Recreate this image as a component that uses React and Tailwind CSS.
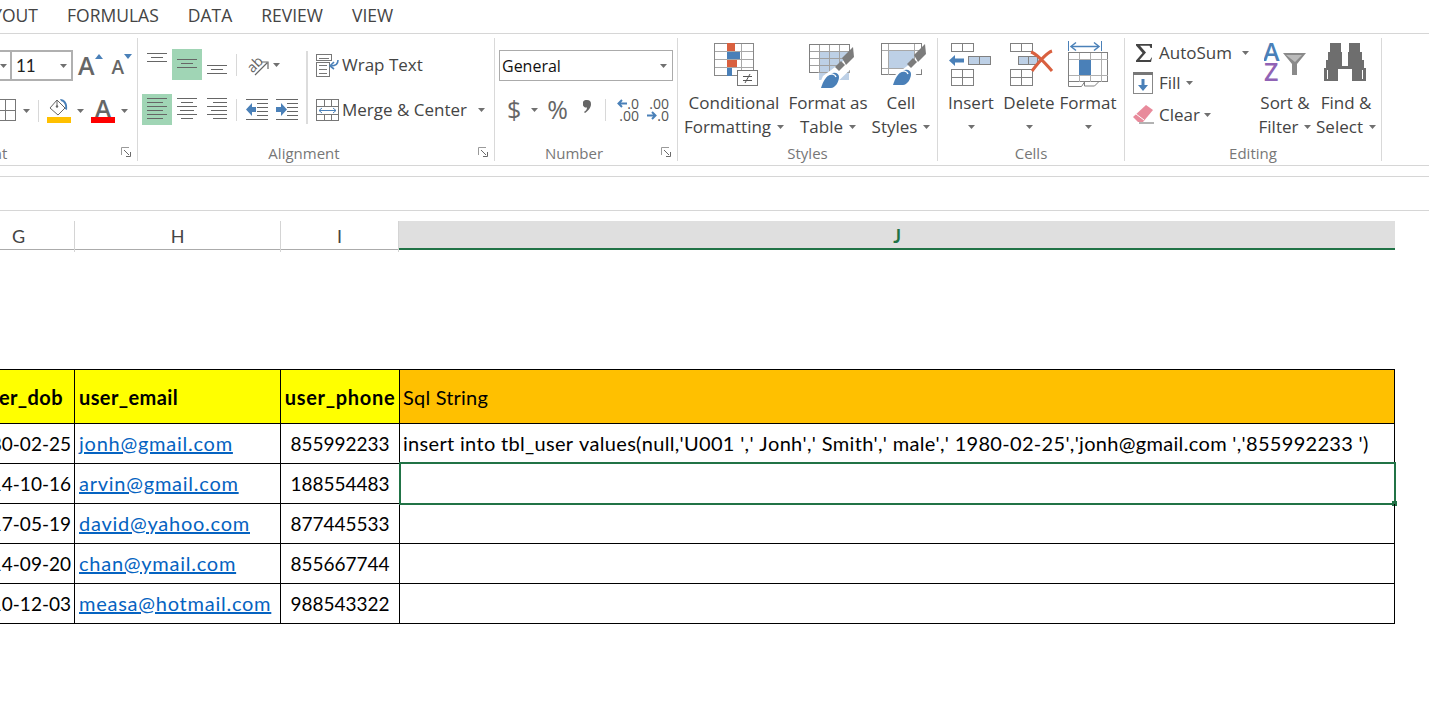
import React from 'react';

const blue = '#4a80b8';
const lightBlue = '#bdd0e6';
const red = '#d9603f';

const Caret = ({ className = '' }) => (
  <svg width="7" height="4" viewBox="0 0 7 4" className={`shrink-0 ${className}`}>
    <path d="M0 0h7L3.500 4z" fill="#707070" />
  </svg>
);

const Launcher = () => (
  <svg width="11" height="11" viewBox="0 0 11 11" className="absolute right-[5px] top-[5px]">
    <path d="M.5 8V.5H8" fill="none" stroke="#9a9a9a" />
    <path d="M3 3l5 5M9.500 5v4.500H5" fill="none" stroke="#6a6a6a" />
  </svg>
);

// horizontal rule icons for the alignment buttons: [x, y, w]
const Lines = ({ lines, w = 30, h = 31 }) => (
  <svg width={w} height={h} viewBox={`0 0 ${w} ${h}`} shapeRendering="crispEdges" className="block">
    {lines.map(([x, y, width], i) => (
      <rect key={i} x={x} y={y} width={width} height="1" fill="#666" />
    ))}
  </svg>
);

const AlignBtn = ({ lines, active }) => (
  <div className={`w-[30px] h-[31px] ${active ? 'bg-[#a0d5b5]' : ''}`}>
    <Lines lines={lines} />
  </div>
);

const VSep = () => <div className="w-px h-[22px] bg-[#d8d8d8]" />;

const IndentIcon = ({ right }) => (
  <svg width="23" height="21" viewBox="0 0 23 21" shapeRendering="crispEdges">
    <path d="M0 0.500h22M0 20.500h22M11 4.500h11M11 8.500h11M11 12.500h11M11 16.500h11" stroke="#666" fill="none" />
    <g shapeRendering="auto">
      {right ? <path d="M0 8h5V4l6 6.500-6 6.500v-4H0z" fill={blue} /> : <path d="M10 8H6V4l-6 6.500L6 17v-4h4z" fill={blue} />}
    </g>
  </svg>
);

const WrapIcon = () => (
  <svg width="24" height="23" viewBox="0 0 24 23" shapeRendering="crispEdges">
    <path d="M.5.500h15v6H.5zM.5 8.500h13v14H.5z" fill="#fff" stroke="#777" />
    <path d="M3 4h10M3 11h8M3 15h8M3 19h8" stroke="#777" />
    <path d="M22 6c0 5-3 6-7 6" fill="none" stroke={blue} strokeWidth="1.600" shapeRendering="auto" />
    <path d="M18 8l-4 4 4 3" fill="none" stroke={blue} strokeWidth="1.600" shapeRendering="auto" />
  </svg>
);

const MergeIcon = () => (
  <svg width="24" height="23" viewBox="0 0 24 23" shapeRendering="crispEdges">
    <path d="M.5.500h22v21H.5zM.5 7.500h22M.5 15.500h22M8.500.500v7M15.500.500v7M8.500 15.500v6M15.500 15.500v6" fill="none" stroke="#777" />
    <path d="M3 11.500h17" stroke={blue} />
    <path d="M6 9l-3 2.500L6 14M17 9l3 2.500L17 14" fill="none" stroke={blue} shapeRendering="auto" />
  </svg>
);

const CommaIcon = () => (
  <svg width="8" height="13" viewBox="0 0 8 13">
    <path d="M4 0a4 4 0 0 1 4 4c0 4-3 7-6 9l-1-1c2-1 3-3 3-4.500A3.800 3.800 0 1 1 4 0z" fill="#666" />
  </svg>
);

const ArrowSmall = ({ right }) => (
  <svg width="10" height="9" viewBox="0 0 10 9">
    {right ? <path d="M0 4.500h8M5 1l3.500 3.500L5 8" fill="none" stroke={blue} strokeWidth="2" /> : <path d="M10 4.500H2M5 1L1.500 4.500 5 8" fill="none" stroke={blue} strokeWidth="2" />}
  </svg>
);

const CondIcon = () => (
  <svg width="46" height="44" viewBox="0 0 46 44" shapeRendering="crispEdges">
    <path d="M.5.500h39v32H.5zM.5 8.500h39M.5 16.500h39M.5 24.500h39M13.500.500v32M27.500.500v32" fill="#fff" stroke="#a8a8a8" />
    <path d="M.5.500h39v32H.5z" fill="none" stroke="#888" />
    <rect x="13" y="0" width="8" height="8" fill={red} />
    <rect x="13" y="9" width="13" height="7" fill={blue} />
    <rect x="13" y="17" width="10" height="7" fill={red} />
    <rect x="13" y="25" width="5" height="8" fill={blue} />
    <rect x="23.500" y="27.500" width="20" height="15" fill="#fff" stroke="#777" />
    <path d="M29 33h9M29 37h9" stroke="#555" />
    <path d="M36 31l-5 9" stroke="#555" shapeRendering="auto" />
  </svg>
);

const Brush = () => (
  <g>
    <path d="M33 14l11-11 1 10-8 8z" fill="#7c7c7c" />
    <path d="M26 23l6-6 4 4-6 6z" fill="#7c7c7c" />
    <path d="M12 44c2-6 4-12 12-15 3-1 6 1 6 4 0 5-4 11-8 11z" fill={blue} />
    <path d="M19 31c3-2 7-1 8 2" fill="none" stroke="#fff" strokeWidth="1.400" />
  </g>
);

const TableStyleIcon = () => (
  <svg width="46" height="46" viewBox="0 0 46 46">
    <g shapeRendering="crispEdges">
      <rect x="10" y="8" width="30" height="28" fill={lightBlue} />
      <path d="M.5.500h40v28H.5zM.5 7.500h40M.5 14.500h40M.5 21.500h30M10.500.500v28M20.500.500v28M30.500.500v28" fill="none" stroke="#a0a0a0" />
      <path d="M.5 28.500V.5h40v8M.5 28.500h8" fill="none" stroke="#808080" />
    </g>
    <path d="M41 12l6-6v14L20 46H8l6-14z" fill="#fff" />
    <Brush />
  </svg>
);

const CellStyleIcon = () => (
  <svg width="46" height="44" viewBox="0 0 46 44">
    <g shapeRendering="crispEdges">
      <path d="M.5.500h40v31H.5z" fill="#fff" stroke="#808080" />
      <rect x="7.500" y="7.500" width="26" height="18" fill={lightBlue} stroke="#a8a8a8" />
      <path d="M.5 7.500h7M33.500 7.500h7M.5 25.500h7M7.500.500v7M33.500.500v7M7.500 25.500v6" stroke="#a8a8a8" />
    </g>
    <path d="M41 12l6-6v14L20 46H8l6-14z" fill="#fff" />
    <g transform="translate(0 -2)"><Brush /></g>
  </svg>
);

const InsertIcon = () => (
  <svg width="46" height="44" viewBox="0 0 46 44">
    <g shapeRendering="crispEdges">
      <path d="M3.500.500h22v8h-22zM14.500.500v8M3.500 26.500h22v16h-22zM3.500 34.500h22M14.500 26.500v16" fill="#fff" stroke="#808080" />
      <path d="M20.500 13.500h22v8h-22z" fill={lightBlue} stroke="#808080" />
      <path d="M31.500 13.500v8" stroke="#808080" />
    </g>
    <path d="M16 15.500H7V12l-6 5.500L7 23v-3.500h9z" fill={blue} />
  </svg>
);

const DeleteIcon = () => (
  <svg width="46" height="44" viewBox="0 0 46 44">
    <g shapeRendering="crispEdges">
      <path d="M.5.500h22v8H.5zM11.500.500v8M.5 26.500h22v16H.5zM.5 34.500h22M11.500 26.500v16" fill="#fff" stroke="#808080" />
      <path d="M8.500 13.500h19v8h-19z" fill={lightBlue} stroke="#808080" />
      <path d="M18.500 13.500v8" stroke="#808080" />
    </g>
    <path d="M28 13l5 4.500-5 4.500z" fill={lightBlue} />
    <path d="M21 9c6 2 15 12 21 19M42 8C36 10 28 20 22 28" fill="none" stroke={red} strokeWidth="3" />
  </svg>
);

const FormatIcon = () => (
  <svg width="42" height="47" viewBox="0 0 42 47">
    <path d="M.5 0v10M33.500 0v10" stroke="#4a80b8" shapeRendering="crispEdges" />
    <path d="M4 5.500h26" stroke={blue} strokeWidth="1.500" />
    <path d="M8 1.500L3 5.500l5 4M26 1.500l5 4-5 4" fill="none" stroke={blue} strokeWidth="1.500" />
    <g shapeRendering="crispEdges">
      <path d="M.5 11.500h39v29H.5z" fill="#fff" stroke="#808080" />
      <path d="M.5 18.500h39M.5 34.500h39M11.500 11.500v29M22.500 11.500v29M33.500 11.500v29" stroke="#b0b0b0" />
      <rect x="11" y="19" width="12" height="15" fill={blue} />
    </g>
    <path d="M.5 41v4.500h13l3-4.500v4h10l4-4" fill="none" stroke="#808080" />
  </svg>
);

const SigmaIcon = () => (
  <svg width="18" height="18" viewBox="0 0 18 18">
    <path d="M1 0h16v4h-1.500l-1-2.200H5l6 6.700-6.500 7.500h10.500l1.500-2.500H17L16 18H1v-1.500L7.500 9 1 1.500z" fill="#444" />
  </svg>
);

const FillIcon = () => (
  <svg width="21" height="23" viewBox="0 0 21 23" shapeRendering="crispEdges">
    <path d="M.5.500h19v21H.5z" fill="#fff" stroke="#888" />
    <rect x="0" y="0" width="20" height="3" fill="#777" />
    <path d="M8.500 7h3v6h3.500l-5 6-5-6h3.500z" fill={blue} shapeRendering="auto" />
  </svg>
);

const EraserIcon = () => (
  <svg width="21" height="19" viewBox="0 0 21 19">
    <path d="M13 0l7 5-10 12H5L0 12z" fill="#e88a9b" />
    <path d="M3 9l8 6" stroke="#fff" strokeWidth="1" />
    <path d="M6 18h15" stroke="#666" strokeWidth="1" />
  </svg>
);

const SortIcon = () => (
  <svg width="44" height="40" viewBox="0 0 44 40">
    <text x="-1" y="18" fontFamily="'Open Sans', sans-serif" fontSize="25" fontWeight="600" fill={blue}>A</text>
    <text x="0" y="38" fontFamily="'Open Sans', sans-serif" fontSize="25" fontWeight="600" fill="#9063b5">Z</text>
    <path d="M19 10h23l-9 11v11h-5V21z" fill="#8a8a8a" />
    <path d="M22 12h16l-7 7z" fill="#bbb" />
  </svg>
);

const BinocularsIcon = () => (
  <svg width="42" height="38" viewBox="2 0 38 38" preserveAspectRatio="none" shapeRendering="crispEdges">
    <path d="M7 0h10v9h1v14h6V9h1V0h10v9h1v8h2v8h2v13H27V26h-12v12H2V25h2v-8h2V9h1z" fill="#6e6e6e" />
    <path d="M5 27h1v9H5zM36 27h1v9h-1z" fill="#fff" />
  </svg>
);

const BucketIcon = () => (
  <svg width="22" height="18" viewBox="0 0 22 18">
    <path d="M9 1l8 8-7 7-8-7z" fill="#fff" stroke="#666" />
    <path d="M9 1v6" stroke="#666" />
    <circle cx="9" cy="7.500" r="1.200" fill="#666" />
    <path d="M12 0c5 0 8 4 7 11l-2-1c1-4-1-7-4-8z" fill={blue} />
  </svg>
);

const BigBtn = ({ width, icon, lines, caretLine, iconClass = '' }) => (
  <div className={`flex flex-col items-center shrink-0 ${width}`}>
    <div className={`h-[53px] flex justify-center ${iconClass}`}>{icon}</div>
    {lines.map((line, i) => (
      <div key={i} className="h-[24px] leading-[24px] whitespace-nowrap flex items-center gap-[6px]">
        {line}
        {caretLine === i && <Caret />}
      </div>
    ))}
    {caretLine === 1 && lines.length === 1 && (
      <div className="h-[24px] flex items-center">
        <Caret />
      </div>
    )}
  </div>
);

const Group = ({ width, label, launcher, labelClass = '', children }) => (
  <div className={`${width} shrink-0 h-[123px] border-r border-[#d9d9d9] flex flex-col`}>
    <div className="h-[104px] overflow-hidden">{children}</div>
    <div className="relative h-[19px] leading-[22px] text-center text-[#777] text-[15px]">
      <div className={labelClass}>{label}</div>
      {launcher && <Launcher />}
    </div>
  </div>
);

const rows = [
  ['1980-02-25', 'jonh@gmail.com', '855992233', "insert into tbl_user values(null,'U001 ',' Jonh',' Smith',' male',' 1980-02-25','jonh@gmail.com ','855992233 ')"],
  ['2014-10-16', 'arvin@gmail.com', '188554483', ''],
  ['2017-05-19', 'david@yahoo.com', '877445533', ''],
  ['2014-09-20', 'chan@ymail.com', '855667744', ''],
  ['2010-12-03', 'measa@hotmail.com', '988543322', ''],
];

const App = () => {
  return (
    <div className="w-[1429px] h-[727px] overflow-hidden bg-white font-['Open_Sans',sans-serif] text-[#444] text-[17px]">
      {/* Tabs */}
      <div className="h-[34px] border-b border-[#d6d6d6] flex items-center gap-[29px] overflow-hidden text-[17.5px] text-[#444] pb-[2px]">
        <span className="ml-[-32px] w-[70px] text-right whitespace-nowrap">LAYOUT</span>
        <span>FORMULAS</span>
        <span>DATA</span>
        <span>REVIEW</span>
        <span>VIEW</span>
      </div>

      {/* Ribbon */}
      <div className="h-[132px] border-b border-[#d6d6d6] pt-[4px] flex">
        <Group width="w-[138px]" label="Font" labelClass="text-left ml-[-24px]" launcher>
          <div className="pt-[12px]">
            <div className="flex items-center h-[31px]">
              <div className="w-[12px] h-[31px] border-y-2 border-r-2 border-[#b0b0b0] flex items-center">
                <Caret />
              </div>
              <div className="w-[61px] h-[31px] border-y-2 border-r-2 border-[#b0b0b0] flex items-center justify-between pl-[4px] pr-[4px] text-[#222] font-['Lato',sans-serif] text-[17px]">
                11
                <Caret />
              </div>
              <span className="ml-[5px] text-[25px] font-semibold leading-none text-[#666]">A</span>
              <svg width="8" height="5" viewBox="0 0 8 5" className="mb-[18px]"><path d="M0 5h8L4 0z" fill={blue} /></svg>
              <span className="ml-[9px] mt-[3px] text-[19px] font-semibold leading-none text-[#666]">A</span>
              <svg width="8" height="5" viewBox="0 0 8 5" className="mb-[18px]"><path d="M0 0h8L4 5z" fill={blue} /></svg>
            </div>
            <div className="flex items-center h-[31px] mt-[14px]">
              <svg width="16" height="23" viewBox="0 0 16 23" shapeRendering="crispEdges">
                <path d="M-1 .500h16.500v21H-1zM-1 11.500h16.500M5.500 .500v21" fill="none" stroke="#777" />
              </svg>
              <Caret className="ml-[7px]" />
              <div className="ml-[8px]"><VSep /></div>
              <div className="ml-[8px] w-[24px] flex flex-col items-center">
                <BucketIcon />
                <div className="w-[24px] h-[6px] bg-[#ffc000]" />
              </div>
              <Caret className="ml-[6px]" />
              <div className="ml-[7px] w-[24px] flex flex-col items-center">
                <span className="h-[18px] leading-[18px] text-[25px] font-semibold text-[#666]">A</span>
                <div className="w-[24px] h-[6px] bg-[#ff0000]" />
              </div>
              <Caret className="ml-[6px]" />
            </div>
          </div>
        </Group>

        <Group width="w-[357px]" label="Alignment" labelClass="pr-[24px]" launcher>
          <div className="flex pt-[11px] pl-[4px]">
            <div className="w-[164px] flex flex-col gap-[14px]">
              <div className="flex items-center h-[31px]">
                <AlignBtn lines={[[5, 4, 20], [9, 8, 12], [5, 12, 20]]} />
                <AlignBtn active lines={[[5, 10, 20], [9, 14, 12], [5, 18, 20]]} />
                <AlignBtn lines={[[5, 16, 20], [9, 20, 12], [5, 24, 20]]} />
                <div className="ml-[4px]"><VSep /></div>
                <svg width="24" height="24" viewBox="0 0 24 24" className="ml-[9px]">
                  <text x="1" y="17" transform="rotate(-45 8 12)" fontSize="14" fontFamily="'Open Sans', sans-serif" fill="#666">ab</text>
                  <path d="M9 22L21 10M15 9h7v7" fill="none" stroke="#666" strokeWidth="1.200" />
                </svg>
                <Caret className="ml-[3px]" />
              </div>
              <div className="flex items-center h-[31px]">
                <AlignBtn active lines={[[5, 4, 20], [5, 8, 16], [5, 12, 20], [5, 16, 16], [5, 20, 20], [5, 24, 16]]} />
                <AlignBtn lines={[[5, 4, 20], [9, 8, 12], [5, 12, 20], [8, 16, 14], [5, 20, 20], [9, 24, 12]]} />
                <AlignBtn lines={[[5, 4, 20], [11, 8, 14], [5, 12, 20], [9, 16, 16], [5, 20, 20], [11, 24, 14]]} />
                <div className="ml-[4px]"><VSep /></div>
                <div className="ml-[9px] flex gap-[7px]">
                  <IndentIcon />
                  <IndentIcon right />
                </div>
              </div>
            </div>
            <div className="w-[2px] h-[73px] mt-[2px] bg-[#dcdcdc]" />
            <div className="pl-[8px] flex flex-col gap-[14px]">
              <div className="h-[31px] pt-[1px] flex items-center gap-[2px] whitespace-nowrap"><WrapIcon />Wrap Text</div>
              <div className="h-[31px] pt-[1px] flex items-center gap-[2px] whitespace-nowrap"><MergeIcon />Merge &amp; Center<Caret className="ml-[9px]" /></div>
            </div>
          </div>
        </Group>

        <Group width="w-[183px]" label="Number" labelClass="pr-[24px]" launcher>
          <div className="pt-[12px] pl-[4px]">
            <div className="w-[174px] h-[31px] border border-[#ababab] flex items-center justify-between pl-[2px] pr-[5px] text-[#111] text-[16px]">
              General
              <Caret />
            </div>
            <div className="h-[31px] mt-[13px] flex items-center">
              <span className="ml-[8px] text-[25px] leading-none text-[#666]">$</span>
              <Caret className="ml-[10px]" />
              <span className="ml-[9px] text-[25px] leading-none text-[#666]">%</span>
              <span className="ml-[15px] mb-[6px] flex"><CommaIcon /></span>
              <div className="ml-[14px]"><VSep /></div>
              <div className="ml-[9px] w-[24px] text-[14px] leading-[12px] text-[#555] flex flex-col items-end">
                <div className="flex items-center"><ArrowSmall />.0</div>
                <div>.00</div>
              </div>
              <div className="ml-[6px] w-[24px] text-[14px] leading-[12px] text-[#555] flex flex-col items-end">
                <div>.00</div>
                <div className="flex items-center"><ArrowSmall right />.0</div>
              </div>
            </div>
          </div>
        </Group>

        <Group width="w-[260px]" label="Styles">
          <div className="flex">
            <BigBtn width="w-[112px]" iconClass="pt-[5px] pl-[6px]" icon={<CondIcon />} lines={['Conditional', 'Formatting']} caretLine={1} />
            <BigBtn width="w-[76px]" iconClass="pt-[6px] pl-[8px]" icon={<TableStyleIcon />} lines={['Format as', 'Table']} caretLine={1} />
            <BigBtn width="w-[70px]" iconClass="pt-[5px] pl-[6px]" icon={<CellStyleIcon />} lines={['Cell', 'Styles']} caretLine={1} />
          </div>
        </Group>

        <Group width="w-[187px]" label="Cells">
          <div className="flex">
            <BigBtn width="w-[66px]" iconClass="pt-[5px]" icon={<InsertIcon />} lines={['Insert']} caretLine={1} />
            <BigBtn width="w-[50px]" iconClass="pt-[5px] pl-[8px]" icon={<DeleteIcon />} lines={['Delete']} caretLine={1} />
            <BigBtn width="w-[68px]" iconClass="pt-[3px] pl-[2px]" icon={<FormatIcon />} lines={['Format']} caretLine={1} />
          </div>
        </Group>

        <Group width="w-[257px]" label="Editing">
          <div className="flex">
            <div className="w-[132px] pl-[8px] pt-[4px] flex flex-col">
              <div className="h-[22px] flex items-center whitespace-nowrap"><span className="ml-[2px] mr-[6px] flex"><SigmaIcon /></span>AutoSum<Caret className="ml-[10px]" /></div>
              <div className="h-[32px] mt-[3px] flex items-center whitespace-nowrap"><span className="mr-[5px] flex"><FillIcon /></span>Fill<Caret className="ml-[5px]" /></div>
              <div className="h-[31px] flex items-center whitespace-nowrap"><span className="mr-[5px] flex"><EraserIcon /></span>Clear<Caret className="ml-[4px]" /></div>
            </div>
            <BigBtn width="w-[56px]" iconClass="pt-[5px] pl-[2px]" icon={<SortIcon />} lines={['Sort &', 'Filter']} caretLine={1} />
            <BigBtn width="w-[66px]" iconClass="pt-[5px] pr-[2px]" icon={<BinocularsIcon />} lines={['Find &', 'Select']} caretLine={1} />
          </div>
        </Group>
      </div>

      {/* Formula bar */}
      <div className="h-[35px] mt-[10px] border-y border-[#d6d6d6]" />

      {/* Column headers */}
      <div className="mt-[10px] w-[1395px] h-[29px] grid grid-cols-[75px_206px_118px_996px] border-b border-[#ababab] font-['Lato',sans-serif] text-[18px] text-[#444]">
        <div className="border-r border-[#d4d4d4] pl-[12px] leading-[31px]">G</div>
        <div className="border-r border-[#d4d4d4] text-center leading-[31px]">H</div>
        <div className="border-r border-[#d4d4d4] text-center leading-[31px]">I</div>
        <div className="bg-[#dfdfdf] h-[29px] border-b-2 border-[#217346] text-center font-bold text-[#217346] leading-[31px]">J</div>
      </div>

      {/* Sheet */}
      <div className="mt-[119px] w-[1395px] border-t border-black font-['Lato',sans-serif] text-[19px] text-black">
        <div className="h-[54px] grid grid-cols-[75px_206px_119px_995px]">
          <div className="bg-[#ffff00] border-r border-b border-black font-bold text-[20px] tracking-[0.4px] overflow-hidden flex items-center justify-end pr-[11px] whitespace-nowrap">user_dob</div>
          <div className="bg-[#ffff00] border-r border-b border-black font-bold text-[20px] tracking-[0.4px] flex items-center pl-[4px]">user_email</div>
          <div className="bg-[#ffff00] border-r border-b border-black font-bold text-[20px] tracking-[0.7px] flex items-center justify-center whitespace-nowrap">user_phone</div>
          <div className="bg-[#ffc000] border-r border-b border-black text-[20px] tracking-[0.2px] flex items-center pl-[3px]">Sql String</div>
        </div>
        {rows.map((row, i) => (
          <div key={i} className="h-[40px] grid grid-cols-[75px_206px_119px_995px]">
            <div className="border-r border-b border-black overflow-hidden flex items-center justify-end pt-[2px] pr-[3px] whitespace-nowrap">{row[0]}</div>
            <div className="border-r border-b border-black flex items-center pb-[2px] pl-[4px] text-[20px] tracking-[0.75px] text-[#0563c1] underline">{row[1]}</div>
            <div className="border-r border-b border-black flex items-center justify-center pt-[2px]">{row[2]}</div>
            <div className="relative border-r border-b border-black flex items-center pb-[2px] pl-[3px] text-[20px] tracking-[0.31px] [font-kerning:none] whitespace-nowrap">
              {row[3]}
              {i === 1 && (
                <div className="absolute left-[-1px] top-[-2px] right-[-2px] bottom-[-2px] border-2 border-[#217346]">
                  <div className="absolute right-[-3px] bottom-[-3px] w-[5px] h-[5px] bg-[#217346]" />
                </div>
              )}
            </div>
          </div>
        ))}
      </div>
    </div>
  );
};

export default App;
